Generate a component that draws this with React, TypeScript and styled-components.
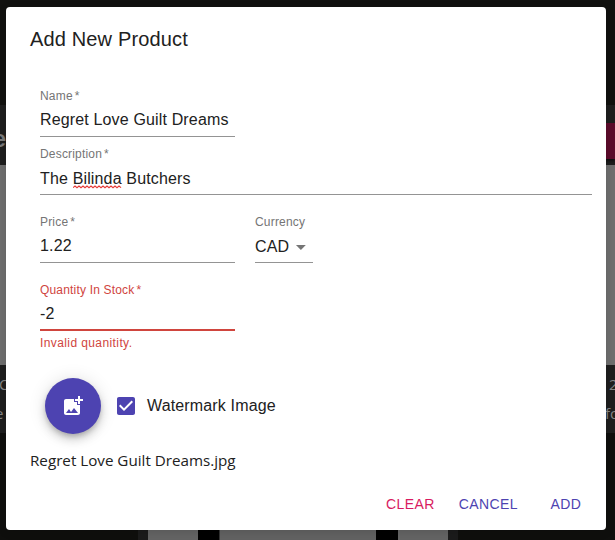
import React from "react";
import styled, { createGlobalStyle } from "styled-components";

const GlobalStyle = createGlobalStyle`
  * { box-sizing: border-box; }
  html, body { margin: 0; padding: 0; overflow: hidden; }
  body { font-family: "Liberation Sans", Arial, sans-serif; background: #11110f; }
`;

const Screen = styled.div`
  position: relative;
  width: 615px;
  height: 540px;
  overflow: hidden;
`;

const Page = styled.div`
  display: flex;
  flex-direction: column;
  height: 100%;
`;

const Band = styled.div<{ $height: number; $color: string }>`
  flex: 0 0 ${(p) => p.$height}px;
  display: flex;
  justify-content: space-between;
  background: ${(p) => p.$color};
  overflow: hidden;
`;

const CardHeading = styled.div`
  width: 6px;
  padding-top: 22px;
  color: #7a7a7a;
  font-size: 24px;
  line-height: 24px;
  font-weight: bold;
  display: flex;
  justify-content: flex-end;
`;

const CardAction = styled.div`
  width: 10px;
  height: 36px;
  margin-top: 18px;
  background: #5c0b2b;
  box-shadow: 0 2px 3px #0008;
`;

const CardText = styled.div`
  width: 9px;
  padding-top: 9px;
  color: #858585;
  font-family: "Open Sans", sans-serif;
  font-size: 15px;
  line-height: 21px;
  overflow: hidden;
  display: flex;
  flex-direction: column;
  gap: 8px;
  white-space: nowrap;
  align-items: flex-start;
`;

const Word = styled.span<{ $shift?: number }>`
  margin-left: ${(p) => p.$shift ?? 0}px;
`;

const Thumbs = styled.div`
  flex: 1;
  display: flex;
  align-items: flex-end;
  padding-left: 138px;
  background: #0f0f0d;
`;

const Thumb = styled.div<{ $width: number; $color: string }>`
  width: ${(p) => p.$width}px;
  height: 10px;
  background: ${(p) => p.$color};
`;

const Dialog = styled.form`
  position: absolute;
  left: 6px;
  top: 7px;
  width: 600px;
  height: 523px;
  display: flex;
  flex-direction: column;
  background: #fff;
  border-radius: 4px;
  box-shadow: 0 2px 10px #0000001f;
  color: #212121;
`;

const Title = styled.h2`
  margin: 0;
  padding: 16px 24px 0;
  height: 81px;
  font-size: 20px;
  font-weight: 400;
  line-height: 32px;
  letter-spacing: 0.15px;
`;

const Fields = styled.div`
  display: flex;
  flex-direction: column;
  padding: 0 14px 0 34px;
`;

const FieldRow = styled.div<{ $height: number }>`
  display: flex;
  gap: 20px;
  height: ${(p) => p.$height}px;
`;

const Field = styled.div<{ $width: number }>`
  width: ${(p) => p.$width}px;
`;

const Label = styled.label<{ $error?: boolean }>`
  display: block;
  height: 16px;
  font-size: 12px;
  line-height: 16px;
  letter-spacing: 0.18px;
  white-space: pre;
  color: ${(p) => (p.$error ? "#d0453e" : "#757575")};
`;

const Asterisk = styled.span`
  margin-left: 2px;
`;

const Value = styled.div<{ $error?: boolean; $low?: boolean }>`
  display: flex;
  align-items: center;
  height: 33px;
  padding-top: ${(p) => (p.$low ? 1 : 0)}px;
  padding-bottom: ${(p) => (p.$error || p.$low ? 0 : 1)}px;
  font-size: 16px;
  line-height: 20px;
  letter-spacing: 0.15px;
  white-space: pre;
  border-bottom: ${(p) => (p.$error ? "2px solid #d0453e" : "1px solid #949494")};
`;

const Misspelled = styled.span`
  position: relative;
`;

const Squiggle = styled.svg`
  position: absolute;
  left: 0;
  top: 15px;
  width: 49px;
  height: 4px;
`;

const Arrow = styled.svg`
  width: 24px;
  height: 24px;
  margin-left: 0;
  fill: #757575;
`;

const HelperText = styled.p`
  margin: 4px 0 0;
  font-size: 12px;
  line-height: 16px;
  letter-spacing: 0.4px;
  color: #d0453e;
`;

const UploadRow = styled.div`
  display: flex;
  align-items: center;
  height: 56px;
  margin: 14px 0 0 39px;
`;

const UploadButton = styled.button`
  display: flex;
  align-items: center;
  justify-content: center;
  width: 56px;
  height: 56px;
  padding: 0;
  border: 0;
  border-radius: 50%;
  background: #4d43b1;
  box-shadow: 0 3px 5px -1px #0003, 0 6px 10px 0 #00000024, 0 1px 18px 0 #0000001f;
`;

const UploadIcon = styled.svg`
  width: 24px;
  height: 24px;
  fill: #fff;
`;

const CheckIcon = styled.svg`
  width: 24px;
  height: 24px;
  margin-left: 13px;
  fill: #4d43b1;
`;

const CheckLabel = styled.span`
  margin-left: 9px;
  font-size: 16px;
  line-height: 24px;
  letter-spacing: 0.15px;
`;

const FileName = styled.div`
  margin: 14px 0 0 24px;
  font-family: "Open Sans", sans-serif;
  font-size: 15.2px;
  line-height: 24px;
  white-space: nowrap;
`;

const Actions = styled.div`
  display: flex;
  justify-content: flex-end;
  gap: 8px;
  margin-top: auto;
  padding: 8px;
`;

const ActionButton = styled.button<{ $color: string }>`
  min-width: 64px;
  height: 36px;
  padding: 0 8px;
  border: 0;
  background: transparent;
  color: ${(p) => p.$color};
  font-family: inherit;
  font-size: 14px;
  line-height: 24px;
  letter-spacing: 0.4px;
`;

const wave =
  "M0 2.7" + Array.from({ length: 24 }, (_, i) => `L${(i + 1) * 2} ${i % 2 ? 2.7 : 1}`).join("");

export default function App() {
  return (
    <>
      <GlobalStyle />
      <Screen>
        <Page>
          <Band $height={105} $color="#11110f" />
          <Band $height={60} $color="#1e1e1e">
            <CardHeading>e</CardHeading>
            <CardAction />
          </Band>
          <Band $height={200} $color="#6e6e6e" />
          <Band $height={68} $color="#1e1e1e">
            <CardText>
              <Word $shift={-1}>C</Word>
              <Word $shift={-5}>e</Word>
            </CardText>
            <CardText>
              <Word $shift={3}>2</Word>
              <Word $shift={-1}>for</Word>
            </CardText>
          </Band>
          <Thumbs>
            <Thumb $width={10} $color="#1b1b1b" />
            <Thumb $width={50} $color="#646464" />
            <Thumb $width={21} $color="#000" />
            <Thumb $width={1} $color="#333" />
            <Thumb $width={156} $color="#626262" />
            <Thumb $width={22} $color="#000" />
            <Thumb $width={50} $color="#646464" />
            <Thumb $width={10} $color="#1b1b1b" />
          </Thumbs>
        </Page>

        <Dialog>
          <Title>Add New Product</Title>
          <Fields>
            <FieldRow $height={58}>
              <Field $width={195}>
                <Label>Name<Asterisk>*</Asterisk></Label>
                <Value>Regret Love Guilt Dreams</Value>
              </Field>
            </FieldRow>
            <FieldRow $height={68}>
              <Field $width={552}>
                <Label>Description<Asterisk>*</Asterisk></Label>
                <Value $low>
                  <span>
                    {"The "}
                    <Misspelled>
                      Bilinda
                      <Squiggle viewBox="0 0 49 4">
                        <path d={wave} fill="none" stroke="#e53935" strokeWidth="1.1" />
                      </Squiggle>
                    </Misspelled>
                    {" Butchers"}
                  </span>
                </Value>
              </Field>
            </FieldRow>
            <FieldRow $height={68}>
              <Field $width={195}>
                <Label>Price<Asterisk>*</Asterisk></Label>
                <Value>1.22</Value>
              </Field>
              <Field $width={58}>
                <Label>Currency</Label>
                <Value $low>
                  CAD
                  <Arrow viewBox="0 0 24 24">
                    <path d="M7 10l5 5 5-5z" />
                  </Arrow>
                </Value>
              </Field>
            </FieldRow>
            <FieldRow $height={82}>
              <Field $width={195}>
                <Label $error>Quantity In Stock<Asterisk>*</Asterisk></Label>
                <Value $error>-2</Value>
                <HelperText>Invalid quanitity.</HelperText>
              </Field>
            </FieldRow>
          </Fields>
          <UploadRow>
            <UploadButton type="button" aria-label="Upload image">
              <UploadIcon viewBox="0 0 24 24">
                <path d="M19 7v2.99s-1.99.01-2 0V7h-3s.01-1.99 0-2h3V2h2v3h3v2h-3zm-3 4V8h-3V5H5c-1.1 0-2 .9-2 2v12c0 1.1.9 2 2 2h12c1.1 0 2-.9 2-2v-8h-3zM5 19l3-4 2 3 3-4 4 5H5z" />
              </UploadIcon>
            </UploadButton>
            <CheckIcon viewBox="0 0 24 24">
              <path d="M19 3H5c-1.11 0-2 .9-2 2v14c0 1.1.89 2 2 2h14c1.11 0 2-.9 2-2V5c0-1.1-.89-2-2-2zm-9 14l-5-5 1.41-1.41L10 14.17l7.59-7.59L19 8l-9 9z" />
            </CheckIcon>
            <CheckLabel>Watermark Image</CheckLabel>
          </UploadRow>
          <FileName>Regret Love Guilt Dreams.jpg</FileName>
          <Actions>
            <ActionButton type="button" $color="#d81b60">CLEAR</ActionButton>
            <ActionButton type="button" $color="#4d43b1">CANCEL</ActionButton>
            <ActionButton type="button" $color="#4d43b1">ADD</ActionButton>
          </Actions>
        </Dialog>
      </Screen>
    </>
  );
}
